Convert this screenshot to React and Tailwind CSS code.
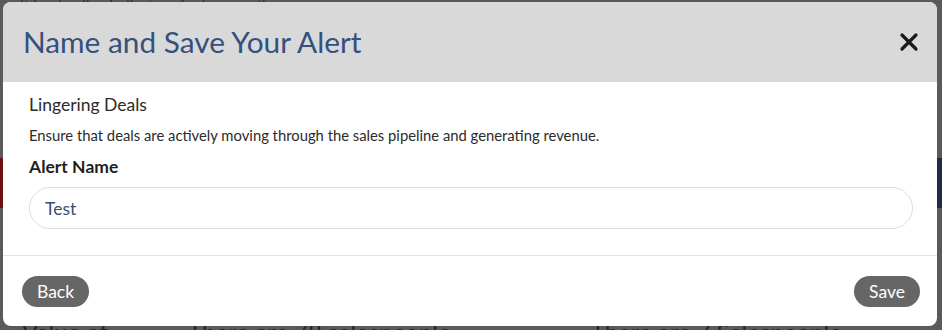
import React, { useState } from 'react';

const CloseIcon = () => (
  <svg width="20" height="20" viewBox="0 0 20 20" fill="none">
    <path d="M3 3L17 17M17 3L3 17" stroke="#1a1a1a" strokeWidth="3.2" strokeLinecap="round" />
  </svg>
);

const App = () => {
  const [alertName, setAlertName] = useState('Test');

  return (
    <div className="relative w-[942px] h-[330px] overflow-hidden bg-[#5a5a5a] font-['Lato','Open_Sans',sans-serif]">
      {/* Dimmed page behind the modal */}
      <div className="flex flex-col h-full">
        <div className="h-[10px] text-[15px] leading-[10px] text-[#333] pl-[20px] overflow-hidden">
          It is a leading indicator of sales growth
        </div>
        <div className="flex justify-between mt-[148px] h-[50px]">
          <div className="w-[4px] bg-[#6e0f10]" />
          <div className="w-[6px] bg-[#1e2c44]" />
        </div>
        <div className="flex-1" />
        <div className="flex gap-[80px] pl-[22px] text-[24px] leading-[20px] h-[8px] text-[#262626]">
          <span>Value of</span>
          <span>There are 78 salespeople</span>
          <span className="ml-[60px]">There are 7 Salespeople</span>
        </div>
      </div>

      {/* Modal */}
      <div className="absolute left-[3px] top-[2px] w-[934px] h-[324px] bg-white rounded-[8px] overflow-hidden flex flex-col">
        <div className="h-[80px] bg-[#d9d9d9] flex items-center justify-between pl-[20px] pr-[18px] shrink-0">
          <h2 className="text-[29.8px] text-[#34507d] leading-none">Name and Save Your Alert</h2>
          <button className="p-0">
            <CloseIcon />
          </button>
        </div>

        <div className="px-[26px] pt-[11px] pb-[26px] border-b border-[#e3e3e3]">
          <p className="text-[17.5px] leading-[24px] text-[#2b2b2b]">Lingering Deals</p>
          <p className="mt-[8px] text-[14.8px] leading-[20px] text-[#2b2b2b]">
            Ensure that deals are actively moving through the sales pipeline and generating revenue.
          </p>
          <label className="block mt-[10px] text-[17.5px] leading-[24px] font-bold text-[#1f1f1f]">Alert Name</label>
          <input
            value={alertName}
            onChange={(e) => setAlertName(e.target.value)}
            className="mt-[8px] w-[884px] h-[42px] rounded-full border border-[#dcdcdc] px-[15px] text-[17.5px] text-[#34507d] outline-none"
          />
        </div>

        <div className="flex justify-between pl-[19px] pr-[17px] pt-[20px]">
          <button className="h-[31px] px-[15px] rounded-full bg-[#666666] text-white text-[17.5px] leading-none">
            Back
          </button>
          <button className="h-[31px] px-[15px] rounded-full bg-[#666666] text-white text-[17.5px] leading-none">
            Save
          </button>
        </div>
      </div>
    </div>
  );
};

export default App;
